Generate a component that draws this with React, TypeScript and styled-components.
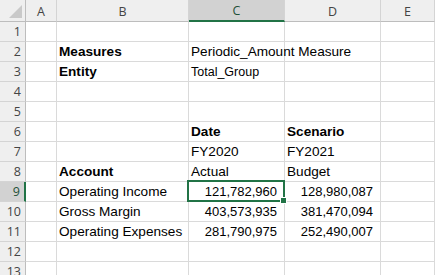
import React from 'react';
import styled, { createGlobalStyle, css } from 'styled-components';

const GlobalStyle = createGlobalStyle`
  html, body {
    margin: 0;
    padding: 0;
    background: #ffffff;
    overflow: hidden;
  }
`;

type CellSpec = {
  text?: string;
  bold?: boolean;
  small?: boolean;
  right?: boolean;
};

const columns = ['A', 'B', 'C', 'D', 'E'];
const selectedCol = 'C';
const selectedRow = 9;

const rows: Record<number, Partial<Record<string, CellSpec>>> = {
  2: { B: { text: 'Measures', bold: true }, C: { text: 'Periodic_Amount Measure' } },
  3: { B: { text: 'Entity', bold: true }, C: { text: 'Total_Group', small: true } },
  6: { C: { text: 'Date', bold: true }, D: { text: 'Scenario', bold: true } },
  7: { C: { text: 'FY2020' }, D: { text: 'FY2021' } },
  8: { B: { text: 'Account', bold: true }, C: { text: 'Actual' }, D: { text: 'Budget' } },
  9: {
    B: { text: 'Operating Income' },
    C: { text: '121,782,960', right: true },
    D: { text: '128,980,087', right: true },
  },
  10: {
    B: { text: 'Gross Margin' },
    C: { text: '403,573,935', right: true },
    D: { text: '381,470,094', right: true },
  },
  11: {
    B: { text: 'Operating Expenses' },
    C: { text: '281,790,975', right: true },
    D: { text: '252,490,007', right: true },
  },
};

const App = () => {
  const rowNumbers = Array.from({ length: 13 }, (_, i) => i + 1);
  return (
    <>
      <GlobalStyle />
      <Sheet>
        <Corner>
          <CornerTriangle />
        </Corner>
        {columns.map((c) => (
          <ColHeader key={c} selected={c === selectedCol}>
            {c}
          </ColHeader>
        ))}
        {rowNumbers.map((r) => (
          <React.Fragment key={r}>
            <RowHeader selected={r === selectedRow}>{r}</RowHeader>
            {columns.map((c) => {
              const spec = rows[r]?.[c];
              const active = r === selectedRow && c === selectedCol;
              return (
                <Cell key={c} right={!!spec?.right}>
                  {spec?.text && (
                    <CellText bold={!!spec.bold} small={!!spec.small} num={!!spec.right}>
                      {spec.text}
                    </CellText>
                  )}
                  {active && (
                    <Selection>
                      <FillHandle />
                    </Selection>
                  )}
                </Cell>
              );
            })}
          </React.Fragment>
        ))}
      </Sheet>
    </>
  );
};

export default App;

const Sheet = styled.div`
  display: grid;
  grid-template-columns: 26px 31px 132px 96px 96px 1fr;
  grid-template-rows: 22px repeat(13, 20px);
  width: 435px;
  height: 275px;
  overflow: hidden;
  font-family: 'Liberation Sans', Arial, sans-serif;
`;

const headerBase = css`
  box-sizing: border-box;
  background: #efefef;
  border-right: 1px solid #d4d4d4;
  border-bottom: 1px solid #bdbdbd;
  display: flex;
  align-items: center;
  justify-content: center;
  font-family: 'Open Sans', 'Liberation Sans', sans-serif;
  font-size: 12.5px;
  color: #444444;
`;

const Corner = styled.div`
  ${headerBase};
  border-right: 1px solid #bdbdbd;
  position: relative;
`;

const CornerTriangle = styled.div`
  position: absolute;
  right: 3px;
  bottom: 3px;
  width: 0;
  height: 0;
  border-left: 13px solid transparent;
  border-bottom: 13px solid #c9c9c9;
`;

const ColHeader = styled.div<{ selected: boolean }>`
  ${headerBase};
  padding-top: 1px;
  ${({ selected }) =>
    selected &&
    css`
      background: #d2d2d2;
      border-bottom: 2px solid #217346;
      color: #1f5138;
    `}
`;

const RowHeader = styled.div<{ selected: boolean }>`
  ${headerBase};
  border-bottom: 1px solid #d4d4d4;
  border-right: 1px solid #bdbdbd;
  justify-content: flex-end;
  padding-right: 4px;
  ${({ selected }) =>
    selected &&
    css`
      background: #d2d2d2;
      border-right: 2px solid #217346;
      color: #1f5138;
    `}
`;

const Cell = styled.div<{ right: boolean }>`
  box-sizing: border-box;
  position: relative;
  border-right: 1px solid #dadada;
  border-bottom: 1px solid #dadada;
  display: flex;
  align-items: flex-end;
  padding: 0 2px 0;
  white-space: nowrap;
  overflow: visible;
  justify-content: ${({ right }) => (right ? 'flex-end' : 'flex-start')};
  ${({ right }) => right && 'padding-right: 7px;'}
`;

const CellText = styled.span<{ bold: boolean; small: boolean; num: boolean }>`
  font-size: ${({ small, num }) => (small ? '12.5px' : num ? '13px' : '13.6px')};
  line-height: 18px;
  font-weight: ${({ bold }) => (bold ? 700 : 400)};
  color: #000000;
  position: relative;
  z-index: 1;
`;

const Selection = styled.div`
  position: absolute;
  left: -2px;
  top: -2px;
  right: -1px;
  bottom: -1px;
  border: 2px solid #217346;
  pointer-events: none;
  z-index: 2;
`;

const FillHandle = styled.div`
  position: absolute;
  right: -4px;
  bottom: -4px;
  width: 5px;
  height: 5px;
  background: #217346;
  border: 1px solid #ffffff;
`;
